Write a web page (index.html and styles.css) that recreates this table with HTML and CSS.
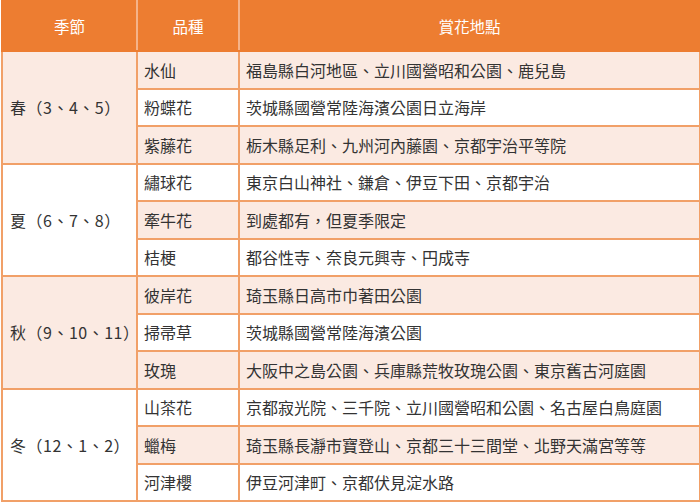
FILE: index.html
```html
<!DOCTYPE html>
<html lang="zh-Hant">
<head>
<meta charset="utf-8">
<link rel="stylesheet" href="styles.css">
</head>
<body>
<table class="flowers">
  <colgroup>
    <col class="c-season">
    <col class="c-kind">
    <col class="c-place">
  </colgroup>
  <thead>
    <tr>
      <th>季節</th>
      <th>品種</th>
      <th>賞花地點</th>
    </tr>
  </thead>
  <tbody>
    <tr class="band">
      <td rowspan="3" class="season band">春（3、4、5）</td>
      <td>水仙</td>
      <td>福島縣白河地區、立川國營昭和公園、鹿兒島</td>
    </tr>
    <tr>
      <td>粉蝶花</td>
      <td>茨城縣國營常陸海濱公園日立海岸</td>
    </tr>
    <tr class="band">
      <td>紫藤花</td>
      <td>栃木縣足利、九州河內藤園、京都宇治平等院</td>
    </tr>
    <tr>
      <td rowspan="3" class="season">夏（6、7、8）</td>
      <td>繡球花</td>
      <td>東京白山神社、鎌倉、伊豆下田、京都宇治</td>
    </tr>
    <tr class="band">
      <td>牽牛花</td>
      <td>到處都有，但夏季限定</td>
    </tr>
    <tr>
      <td>桔梗</td>
      <td>都谷性寺、奈良元興寺、円成寺</td>
    </tr>
    <tr class="band">
      <td rowspan="3" class="season band">秋（9、10、11）</td>
      <td>彼岸花</td>
      <td>琦玉縣日高市巾著田公園</td>
    </tr>
    <tr>
      <td>掃帚草</td>
      <td>茨城縣國營常陸海濱公園</td>
    </tr>
    <tr class="band">
      <td>玫瑰</td>
      <td>大阪中之島公園、兵庫縣荒牧玫瑰公園、東京舊古河庭園</td>
    </tr>
    <tr>
      <td rowspan="3" class="season">冬（12、1、2）</td>
      <td>山茶花</td>
      <td>京都寂光院、三千院、立川國營昭和公園、名古屋白鳥庭園</td>
    </tr>
    <tr class="band">
      <td>蠟梅</td>
      <td>琦玉縣長瀞市寶登山、京都三十三間堂、北野天滿宮等等</td>
    </tr>
    <tr>
      <td>河津櫻</td>
      <td>伊豆河津町、京都伏見淀水路</td>
    </tr>
  </tbody>
</table>
</body>
</html>
```

FILE: styles.css
```css
html, body {
  margin: 0;
  padding: 0;
  background: #ffffff;
}
body {
  font-family: "Noto Sans CJK TC", "Noto Sans", sans-serif;
  font-size: 16px;
  color: #333333;
}
.flowers {
  width: 698px;
  margin: 0 0 0 1px;
  border-collapse: collapse;
  table-layout: fixed;
}
.c-season { width: 135px; }
.c-kind { width: 102px; }
.c-place { width: 461px; }
.flowers th {
  background: #ed7d31;
  color: #ffffff;
  font-weight: 400;
  font-size: 15.5px;
  height: 48px;
  padding: 0;
  text-align: center;
  border: 2px solid #ed7d31;
  border-right-color: #f5b38a;
}
.flowers th:last-child {
  border-right-color: #ed7d31;
}
.flowers td {
  height: 35.5px;
  padding: 0 0 0 6px;
  border: 2px solid #f1a068;
  background: #ffffff;
  white-space: nowrap;
  line-height: 20px;
}
.flowers td.season {
  padding-left: 7px;
  letter-spacing: 0.5px;
}
.flowers tr.band td {
  background: #fbeae2;
}
.flowers td.season {
  background: #ffffff;
}
.flowers td.season.band {
  background: #fbeae2;
}
```
